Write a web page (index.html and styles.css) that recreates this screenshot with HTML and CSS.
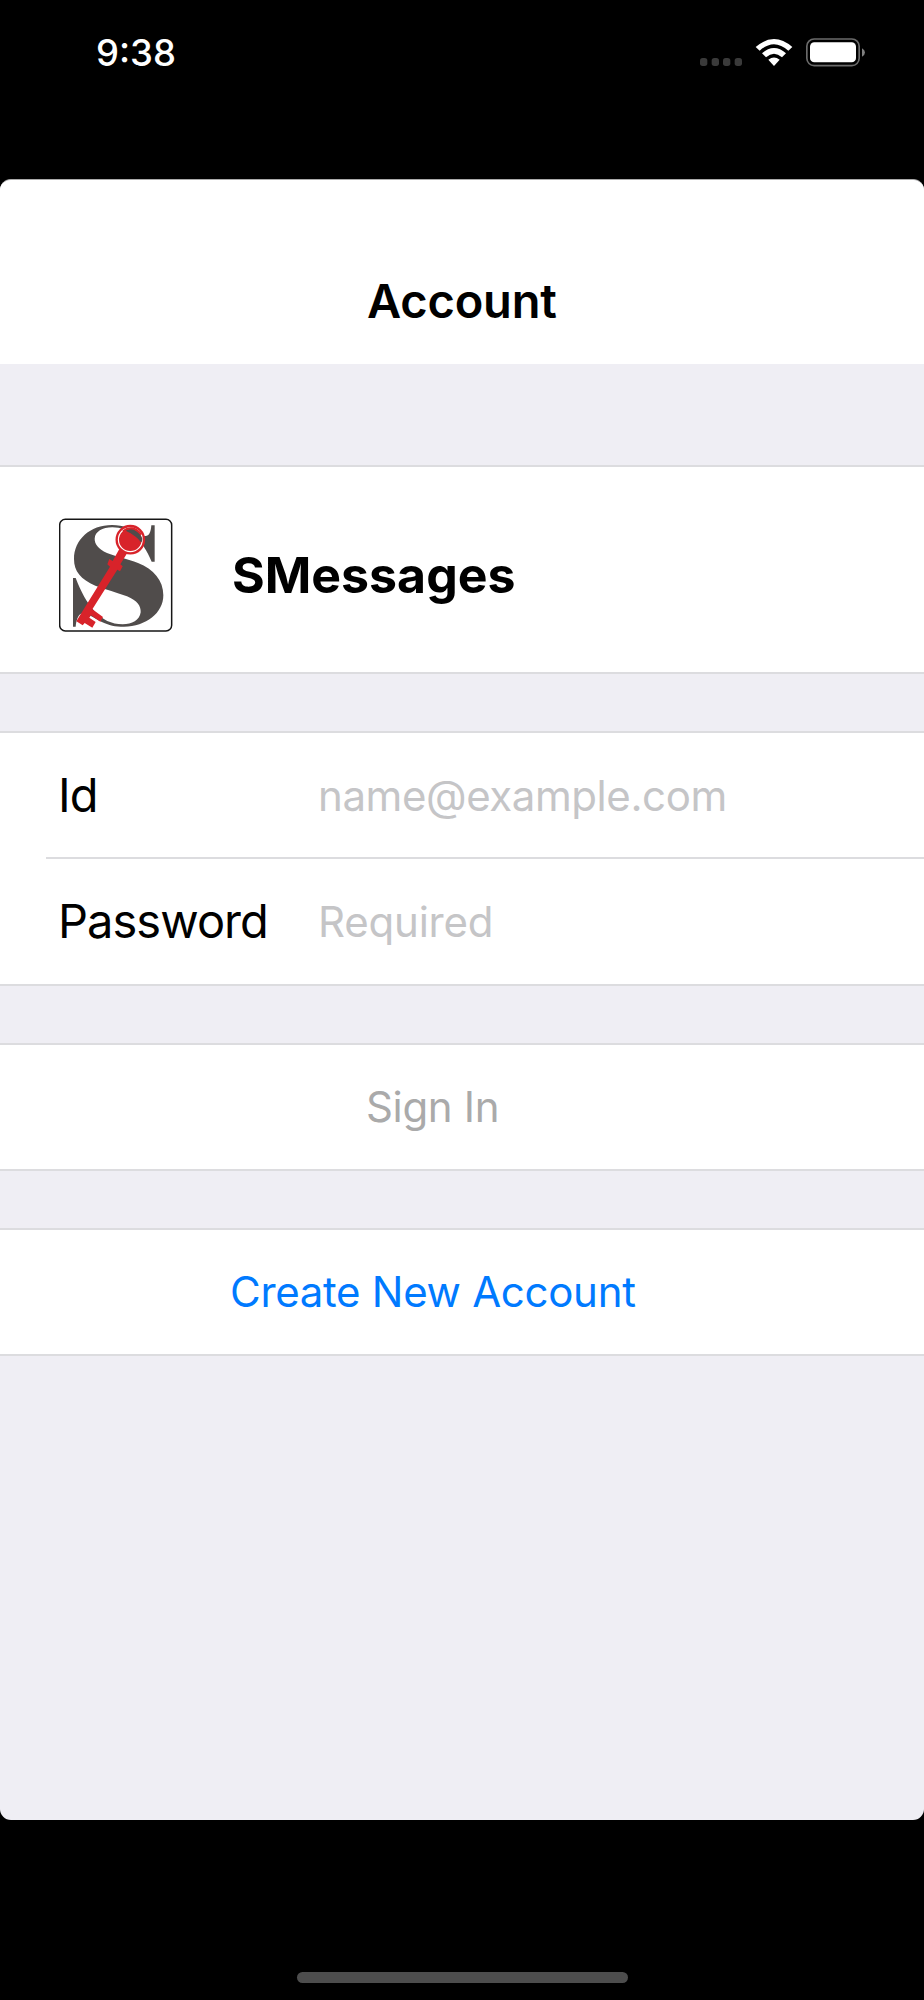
FILE: index.html
```html
<!DOCTYPE html>
<html lang="en">
<head>
<meta charset="utf-8">
<title>Account</title>
<link rel="stylesheet" href="styles.css">
</head>
<body>
<div class="status-bar">
  <span class="time">9:38</span>
  <svg class="indicators" width="172" height="36" viewBox="0 0 516 108">
    <g fill="#3a3a3a">
      <rect x="0" y="66" width="22" height="24" rx="8"/>
      <rect x="35" y="66" width="22" height="24" rx="8"/>
      <rect x="69" y="66" width="22" height="24" rx="8"/>
      <rect x="104" y="66" width="22" height="24" rx="8"/>
    </g>
    <g fill="#fff">
      <path d="M167 33Q222-15 277 33L265 44Q222 5 179 44Z"/>
      <path d="M186 52Q222 20 258 52L246 64Q222 42 198 64Z"/>
      <path d="M205 71Q222 58 239 71L222 90Z"/>
    </g>
    <rect x="320.500" y="9" width="157" height="80" rx="22" fill="none" stroke="#6b6b6b" stroke-width="5"/>
    <rect x="330" y="19" width="138" height="60" rx="13" fill="#fff"/>
    <path d="M486 37Q495 42 495 49.500T486 62Z" fill="#808080"/>
  </svg>
</div>
<main class="sheet">
  <header class="nav"><h1 class="title">Account</h1></header>
  <section class="group brand">
    <svg class="logo" width="114" height="114" viewBox="57 55 342 342">
      <rect x="59" y="59" width="336" height="335" rx="17" fill="#fff" stroke="#161616" stroke-width="4.500"/>
      <path fill="#504c4b" fill-rule="evenodd" d="M344 77H334C332 103 325 113 310 108C276 88 251 76 216 76C150 76 102 120 102 178C102 215 122 239 166 258C196 270 232 278 261 290C292 303 303 319 302 338C299 362 276 374 248 374C181 374 138 316 107 235H99V381H107C109 360 116 341 129 341C143 341 160 355 184 366C207 377 226 381 252 381C318 381 370 340 370 287C370 242 341 209 294 190C263 178 228 171 201 160C174 147 164 133 164 117C165 96 187 83 217 83C267 83 309 123 335 186H344Z"/>
      <path fill="#d8232a" d="M238 148L218 184L208 178L202 194L210 201L132 327L109 365L128 377L134 370L157 384L167 367L148 354L153 347L181 366L189 352L157 329L232 210L240 215L248 200L241 194L264 156Z"/>
      <circle cx="271" cy="120" r="41" fill="#fff" stroke="#d8232a" stroke-width="7"/>
      <circle cx="271" cy="120" r="34" fill="#d8232a"/>
      <path d="M257 90C277 84 299 94 307 117C306 130 303 129 298 122C291 114 282 108 272 101C263 95 257 95 257 90Z" fill="#504c4b"/>
      <path d="M249 95Q277 72 304 105" fill="none" stroke="#d8232a" stroke-width="6"/>
    </svg>
    <span class="app-name">SMessages</span>
  </section>
  <section class="group fields">
    <label class="row"><span class="label">Id</span><span class="placeholder email">name@example.com</span></label>
    <label class="row"><span class="label password">Password</span><span class="placeholder required">Required</span></label>
  </section>
  <section class="group action"><span class="sign-in">Sign In</span></section>
  <section class="group action"><span class="create">Create New Account</span></section>
</main>
<div class="home-indicator"></div>
</body>
</html>
```
FILE: styles.css
```css
* { box-sizing: border-box; }
body {
  margin: 0;
  height: 2000px;
  display: flex;
  flex-direction: column;
  background: #000;
  color: #000;
  font-family: Inter, "Liberation Sans", sans-serif;
  white-space: nowrap;
}
.status-bar {
  flex: none;
  height: 179px;
  padding: 36px 52px 0 96px;
  display: flex;
  justify-content: space-between;
  align-items: flex-start;
}
.time { color: #fff; font-size: 36.500px; font-weight: 550; line-height: 34px; }
.sheet {
  flex: none;
  height: 1641px;
  background: #efeef4;
  border-top: 1px solid #aaa;
  border-radius: 11px;
  overflow: hidden;
}
.nav {
  height: 184px;
  padding: 92px 0 0 367px;
  background: #fff;
}
.title {
  margin: 0;
  font-size: 47px;
  line-height: 58px;
  font-weight: 600;
  letter-spacing: -0.200px;
}
.group {
  background: #fff;
  border-top: 2px solid #dcdcdf;
  border-bottom: 2px solid #dcdcdf;
  margin-bottom: 57px;
}
.brand {
  margin-top: 101px;
  height: 209px;
  padding: 11px 58px 0 59px;
  display: flex;
  align-items: center;
  gap: 59px;
}
.logo { flex: none; display: block; }
.app-name { font-size: 50px; font-weight: 700; }
.fields { height: 255px; }
.row { height: 124px; padding-left: 58px; display: flex; align-items: center; }
.row + .row {
  height: 127px;
  margin-left: 46px;
  padding-left: 12px;
  border-top: 2px solid #dcdcdf;
}
.label { width: 260px; padding-bottom: 2px; font-size: 47px; letter-spacing: -0.950px; }
.placeholder { color: #c5c5c7; font-size: 42px; }
.email { letter-spacing: -0.420px; }
.required { letter-spacing: -0.200px; }
.action { height: 128px; padding-bottom: 1px; display: flex; align-items: center; font-size: 42px; }
.sign-in { margin-left: 366px; color: #aaa; letter-spacing: -0.350px; }
.create { margin-left: 230px; color: #007aff; letter-spacing: -0.300px; }
.home-indicator {
  flex: none;
  width: 331px;
  height: 11px;
  margin: 152px auto 0 297px;
  border-radius: 6px;
  background: #4d4d4d;
}
```
